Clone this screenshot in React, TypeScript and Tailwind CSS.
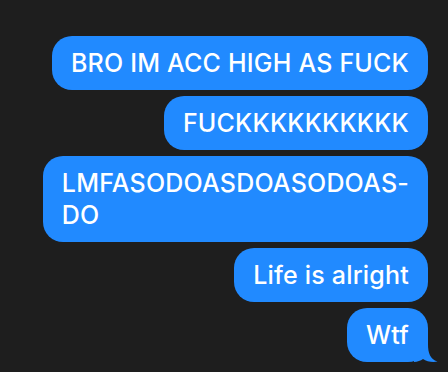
const MESSAGES = [
  "BRO IM ACC HIGH AS FUCK",
  "FUCKKKKKKKKKK",
  "LMFASODOASDOASODOAS-\nDO",
  "Life is alright",
  "Wtf",
];

const Tail = () => (
  <svg
    className="absolute -right-[10px] bottom-0"
    width="24"
    height="24"
    viewBox="0 0 24 24"
  >
    <path
      d="M0 0 H14 V6 C14 15 16 21 23.5 23.6 C18 24.6 12.5 23.4 9 21 C6.5 22.6 3.5 24 0 24 Z"
      fill="#218aff"
    />
  </svg>
);

export default function App() {
  return (
    <div className="min-h-screen w-full bg-[#1e1e1e] font-['Inter','Liberation_Sans',sans-serif]">
      {/* Message thread */}
      <div className="flex flex-col items-end gap-[6px] pt-[36px] pr-[20px] pl-[40px]">
        {MESSAGES.map((text, index) => (
          <div
            key={index}
            className="relative rounded-[20px] bg-[#218aff] px-[19px] py-[11px] text-[25px] font-medium leading-[32px] tracking-[0.2px] text-white whitespace-pre-line"
          >
            {text}
            {index === MESSAGES.length - 1 && <Tail />}
          </div>
        ))}
      </div>
    </div>
  );
}
